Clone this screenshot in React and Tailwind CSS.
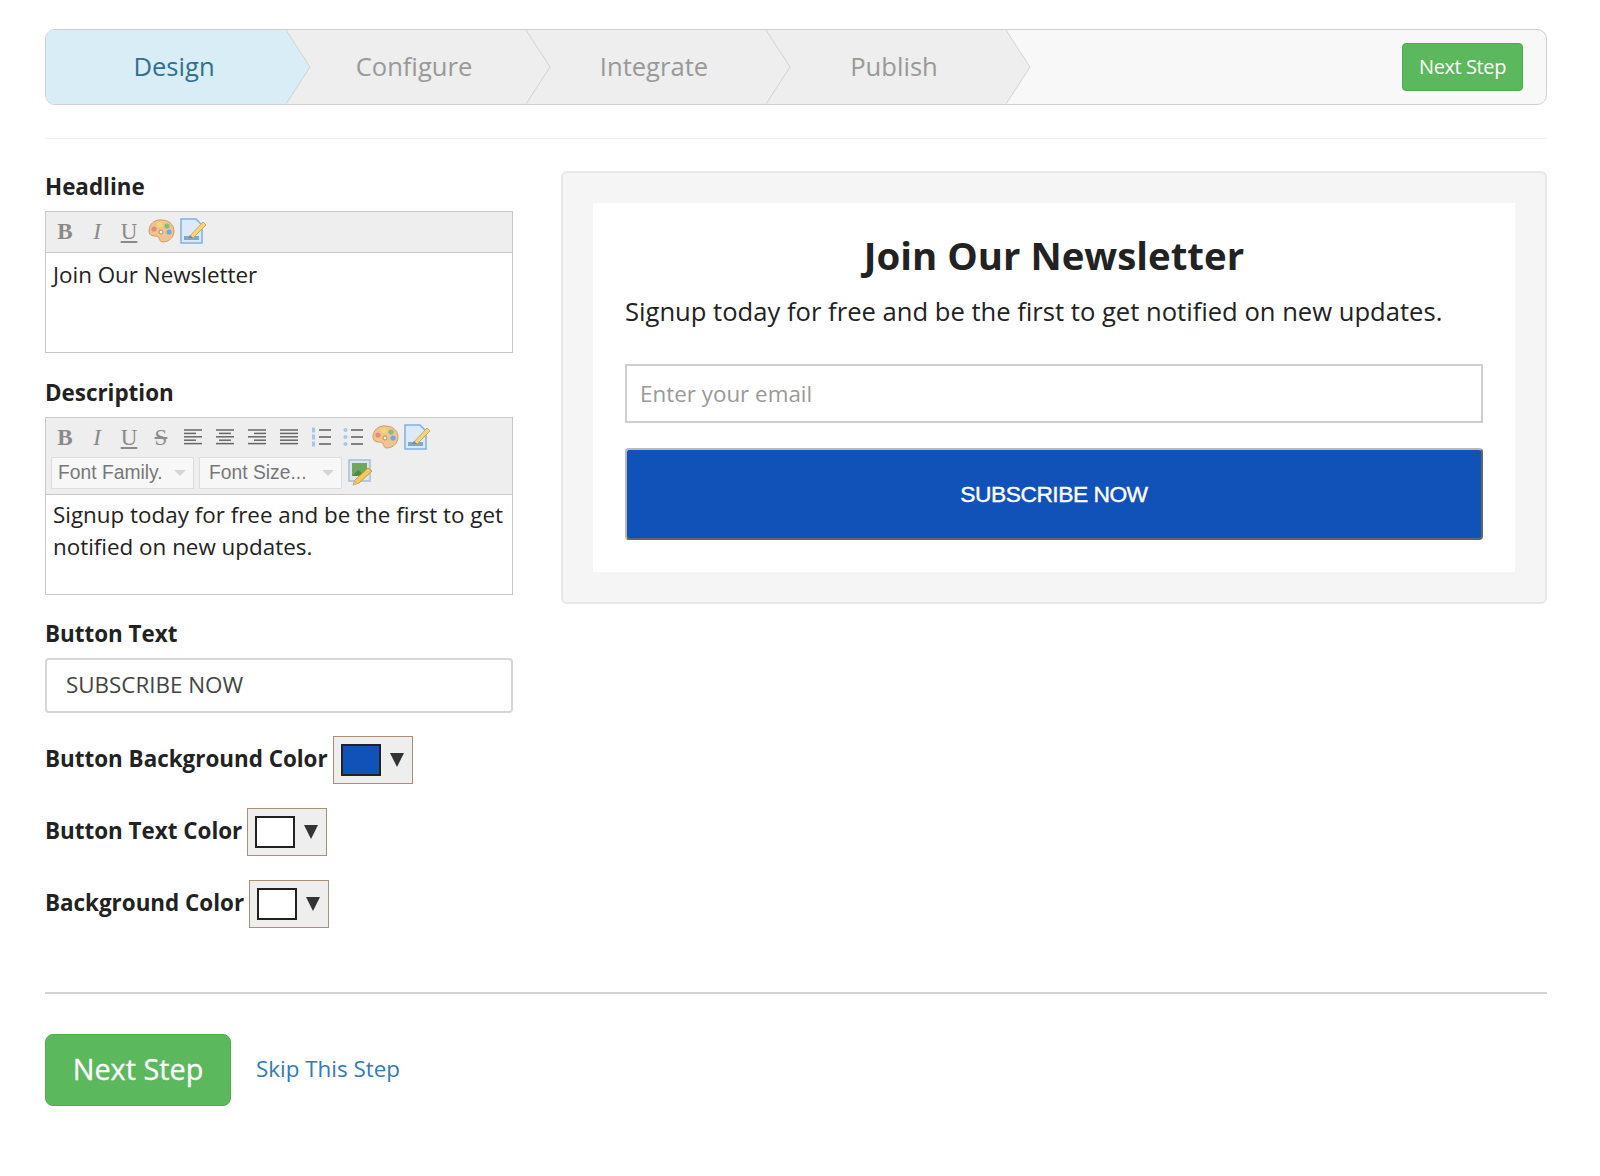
const STEPS = ['Design', 'Configure', 'Integrate', 'Publish']

function Arrow({ fill }) {
  return (
    <svg className="absolute left-full top-0 h-full w-[25px]" viewBox="0 0 25 74" preserveAspectRatio="none">
      <polygon points="0,0 24,37 0,74" fill={fill} />
      <polyline points="0,0 24,37 0,74" fill="none" stroke="#d2d2d2" strokeWidth="1" />
    </svg>
  )
}

function Wizard() {
  return (
    <div className="flex h-[76px] items-stretch overflow-hidden rounded-[10px] border border-[#cfcfcf] bg-[#f8f8f8]">
      {STEPS.map((s, i) => (
        <div
          key={s}
          style={{ zIndex: 10 - i }}
          className={`relative flex w-[240px] items-center justify-center pl-[16px] text-[25.6px] ${i === 0 ? 'bg-[#d9edf7] text-[#31708f]' : 'bg-[#eeeeee] text-[#999999]'}`}
        >
          {s}
          <Arrow fill={i === 0 ? '#d9edf7' : '#eeeeee'} />
        </div>
      ))}
      <div className="ml-auto flex items-center pr-[23px]">
        <button className="flex h-[48px] w-[121px] items-center justify-center rounded-[4px] border border-[#4cae4c] bg-[#5cb85c] text-[20px] font-medium tracking-[-0.4px] text-white">
          Next Step
        </button>
      </div>
    </div>
  )
}

function Palette() {
  return (
    <svg width="30" height="28" viewBox="0 0 30 28">
      <path d="M3 14C3 7 9 2 16 3c7 0 12 5 12 11 0 6-5 11-11 11-3 0-3-2-4-4-1-2-3-2-5-2-3 0-5-2-5-5z" fill="#efc58f" stroke="#cf9d68" />
      <circle cx="8" cy="12" r="2.6" fill="#e58a80" />
      <circle cx="14" cy="7.5" r="2.6" fill="#f2da6e" />
      <circle cx="21" cy="9" r="2.6" fill="#7fbf7a" />
      <circle cx="23" cy="15" r="2.6" fill="#6fa8dc" />
      <circle cx="15" cy="15" r="2" fill="#fff3e0" stroke="#b08a5e" />
    </svg>
  )
}

function DocEdit() {
  return (
    <svg width="28" height="28" viewBox="0 0 28 28">
      <path d="M2 2h15l6 6v18H2z" fill="#dbe9f8" stroke="#7fb0e2" strokeWidth="1.5" />
      <rect x="5" y="19" width="15" height="4" fill="#7fa8d0" />
      <path d="M11 19L24 5l3 3-13 13z" fill="#f3d67a" stroke="#cfa94f" />
      <path d="M9 21l2-3 3 3z" fill="#8a8a8a" />
    </svg>
  )
}

function ImageEdit() {
  return (
    <svg width="28" height="28" viewBox="0 0 28 28">
      <rect x="2" y="1" width="21" height="21" fill="#dde6ef" stroke="#a8bdd3" strokeWidth="1.5" />
      <rect x="5" y="4" width="15" height="13" fill="#6da85c" />
      <path d="M5 17l6-6 4 3 5-3v6z" fill="#4f8a48" />
      <path d="M6 26l2-5L21 9l4 3L12 24z" fill="#f0c95f" stroke="#c99c3c" />
      <path d="M6 26l2-5 4 3z" fill="#e9b98a" />
    </svg>
  )
}

function Align({ kind }) {
  const rows = {
    left: [[0, 18], [0, 12], [0, 18], [0, 12], [0, 18]],
    center: [[0, 18], [3, 15], [0, 18], [3, 15], [0, 18]],
    right: [[0, 18], [6, 18], [0, 18], [6, 18], [0, 18]],
    full: [[0, 18], [0, 18], [0, 18], [0, 18], [0, 18]],
  }[kind]
  return (
    <svg width="20" height="18" viewBox="0 0 20 18">
      {rows.map(([a, b], i) => (
        <line key={i} x1={a + 1} x2={b + 1} y1={2 + i * 3.4} y2={2 + i * 3.4} stroke="#666666" strokeWidth="1.5" />
      ))}
    </svg>
  )
}

function List({ ordered }) {
  return (
    <svg width="22" height="20" viewBox="0 0 22 20">
      {[3, 10, 17].map(y => (
        <g key={y}>
          {ordered
            ? <rect x="2" y={y - 2.5} width="3" height="5" fill="#a9c6ea" />
            : <circle cx="3.5" cy={y} r="2" fill="#a9c6ea" />}
          <line x1="9" x2="21" y1={y} y2={y} stroke="#666666" strokeWidth="1.6" />
        </g>
      ))}
    </svg>
  )
}

function Tool({ children }) {
  return <span className="flex h-[32px] w-[32px] items-center justify-center">{children}</span>
}

function Letter({ children, className = '' }) {
  return (
    <Tool>
      <span className={`font-['Liberation_Serif',serif] text-[23px] leading-none text-[#8a8a8a] ${className}`}>{children}</span>
    </Tool>
  )
}

function FontSelect({ label, className }) {
  return (
    <span className={`flex h-[32px] w-[143px] items-center justify-between border border-[#dddddd] bg-[#f7f7f7] pr-[7px] font-['Liberation_Sans',sans-serif] text-[19.3px] text-[#777777] ${className}`}>
      {label}
      <span className="h-0 w-0 border-x-[6px] border-t-[6px] border-x-transparent border-t-[#d5d5d5]" />
    </span>
  )
}

function Label({ children, className = '' }) {
  return <div className={`text-[22.4px] font-bold leading-[32px] text-[#222222] ${className}`}>{children}</div>
}

function ColorRow({ label, color, className = '' }) {
  return (
    <div className={`flex items-center gap-[5px] ${className}`}>
      <Label className="pb-[3px]">{label}</Label>
      <span className="flex h-[48px] w-[80px] items-center border border-[#a98e73] bg-[#eeeeee] pl-[7px]">
        <span className={`h-[32px] w-[40px] border-2 border-[#222222] ${color}`} />
        <span className="ml-[9px] h-0 w-0 border-x-[7px] border-t-[14px] border-x-transparent border-t-[#333333]" />
      </span>
    </div>
  )
}

function Sidebar() {
  return (
    <div className="w-[468px] shrink-0">
      <Label>Headline</Label>
      <div className="mt-[8px] h-[142px] border border-[#c8c8c8]">
        <div className="flex h-[41px] items-center border-b border-[#c8c8c8] bg-[#eeeeee] px-[3px] pb-[2px]">
          <Letter className="font-bold">B</Letter>
          <Letter className="italic">I</Letter>
          <Letter className="underline">U</Letter>
          <Tool><Palette /></Tool>
          <Tool><DocEdit /></Tool>
        </div>
        <div className="px-[7px] pt-[6px] text-[22.4px] leading-[32px] text-[#222222]">Join Our Newsletter</div>
      </div>

      <Label className="mt-[24px]">Description</Label>
      <div className="mt-[8px] h-[178px] border border-[#c8c8c8]">
        <div className="h-[77px] border-b border-[#c8c8c8] bg-[#eeeeee] px-[3px] pt-[3px]">
          <div className="flex">
            <Letter className="font-bold">B</Letter>
            <Letter className="italic">I</Letter>
            <Letter className="underline">U</Letter>
            <Letter className="line-through">S</Letter>
            <Tool><Align kind="left" /></Tool>
            <Tool><Align kind="center" /></Tool>
            <Tool><Align kind="right" /></Tool>
            <Tool><Align kind="full" /></Tool>
            <Tool><List ordered /></Tool>
            <Tool><List /></Tool>
            <Tool><Palette /></Tool>
            <Tool><DocEdit /></Tool>
          </div>
          <div className="mt-[4px] flex items-center gap-[5px] pl-[2px]">
            <FontSelect label="Font Family." className="pl-[6px]" />
            <FontSelect label="Font Size..." className="pl-[9px]" />
            <ImageEdit />
          </div>
        </div>
        <div className="px-[7px] pt-[4px] text-[22.4px] leading-[32px] text-[#222222]">
          Signup today for free and be the first to get notified on new updates.
        </div>
      </div>

      <Label className="mt-[23px]">Button Text</Label>
      <div className="mt-[8px] flex h-[55px] items-center rounded-[4px] border-2 border-[#d6d6d6] px-[19px] pb-[2px] text-[22.4px] text-[#444444]">
        SUBSCRIBE NOW
      </div>

      <ColorRow label="Button Background Color" color="bg-[#1052b8]" className="mt-[23px]" />
      <ColorRow label="Button Text Color" color="bg-white" className="mt-[24px]" />
      <ColorRow label="Background Color" color="bg-white" className="mt-[24px]" />
    </div>
  )
}

function Preview() {
  return (
    <div className="h-[433px] flex-1 rounded-[6px] border-2 border-[#e8e8e8] bg-[#f5f5f5] p-[30px]">
      <div className="h-[369px] bg-white px-[32px] pt-[26px]">
        <h1 className="text-center text-[38.4px] font-bold leading-[52px] text-[#222222]">Join Our Newsletter</h1>
        <p className="mt-[13px] whitespace-nowrap text-[25.6px] leading-[36px] text-[#222222]">
          Signup today for free and be the first to get notified on new updates.
        </p>
        <div className="mt-[34px] flex h-[59px] items-center border-2 border-[#cfcfcf] px-[13px] text-[22.4px] text-[#999999]">
          Enter your email
        </div>
        <button className="mt-[25px] flex h-[92px] w-full items-center justify-center rounded-[4px] border-2 border-[#b9b9b9] border-b-[#5f6672] border-r-[#5f6672] bg-[#1052b8] font-['Liberation_Sans',sans-serif] text-[22.8px] tracking-[-0.5px] text-white [-webkit-text-stroke:0.4px_white]">
          SUBSCRIBE NOW
        </button>
      </div>
    </div>
  )
}

export default function App() {
  return (
    <div className="min-h-[1176px] bg-white pl-[45px] pr-[53px] pt-[29px] font-['Open_Sans',sans-serif]">
      <Wizard />
      <hr className="mt-[33px] border-t border-[#eeeeee]" />
      <div className="mt-[32px] flex gap-[48px]">
        <Sidebar />
        <Preview />
      </div>
      <hr className="mt-[64px] border-t-2 border-[#d2d2d2]" />
      <div className="mt-[40px] flex items-center gap-[25px]">
        <button className="flex h-[72px] w-[186px] items-center justify-center rounded-[8px] border border-[#4cae4c] bg-[#5cb85c] pb-[3px] text-[28.8px] text-white [-webkit-text-stroke:0.3px_white]">
          Next Step
        </button>
        <a className="pb-[3px] text-[22.4px] text-[#337ab7]">Skip This Step</a>
      </div>
    </div>
  )
}
